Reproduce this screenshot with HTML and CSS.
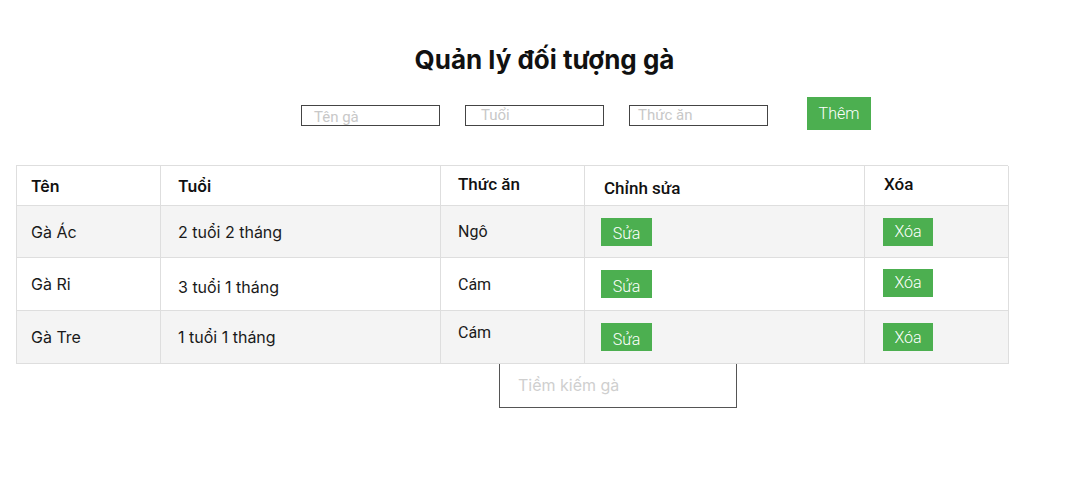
FILE: index.html
```html
<!DOCTYPE html>
<html lang="vi">
<head>
<meta charset="utf-8">
<title>Quản lý đối tượng gà</title>
<link rel="stylesheet" href="styles.css">
</head>
<body>
<div class="page">
  <h1 class="title">Quản lý đối tượng gà</h1>
  <div class="form-row">
    <div class="field pad-a"><span class="ph">Tên gà</span></div>
    <div class="field pad-b"><span class="ph">Tuổi</span></div>
    <div class="field pad-c"><span class="ph">Thức ăn</span></div>
    <button class="btn btn-add">Thêm</button>
  </div>
  <div class="grid">
    <div class="cell head inter">Tên</div>
    <div class="cell head inter col-wide">Tuổi</div>
    <div class="cell head roboto up2">Thức ăn</div>
    <div class="cell head roboto col-wide down2 pl20">Chỉnh sửa</div>
    <div class="cell head roboto up2 pl20">Xóa</div>

    <div class="cell alt inter">Gà Ác</div>
    <div class="cell alt inter col-wide">2 tuổi 2 tháng</div>
    <div class="cell alt roboto">Ngô</div>
    <div class="cell alt col-wide"><button class="btn btn-sm btn-edit">Sửa</button></div>
    <div class="cell alt pl19"><button class="btn btn-sm">Xóa</button></div>

    <div class="cell inter">Gà Ri</div>
    <div class="cell inter col-wide down5">3 tuổi 1 tháng</div>
    <div class="cell roboto">Cám</div>
    <div class="cell col-wide"><button class="btn btn-sm btn-edit">Sửa</button></div>
    <div class="cell pl19 up3"><button class="btn btn-sm">Xóa</button></div>

    <div class="cell alt inter">Gà Tre</div>
    <div class="cell alt inter col-wide">1 tuổi 1 tháng</div>
    <div class="cell alt roboto up10">Cám</div>
    <div class="cell alt col-wide"><button class="btn btn-sm btn-edit">Sửa</button></div>
    <div class="cell alt pl19"><button class="btn btn-sm">Xóa</button></div>
  </div>
  <div class="search-wrap">
    <div class="search"><span class="ph-search">Tiềm kiếm gà</span></div>
  </div>
</div>
</body>
</html>
```

FILE: styles.css
```css
* { box-sizing: border-box; }
html, body { margin: 0; padding: 0; background: #fff; }
body { font-family: "Roboto", "Liberation Sans", sans-serif; color: #111; }

.page { width: 1071px; }

.title {
  margin: 0;
  padding: 43px 0 0 18px;
  height: 97px;
  text-align: center;
  font-family: "Inter", "Roboto", sans-serif;
  font-size: 26px;
  font-weight: 700;
  line-height: 34px;
  color: #111;
}

.form-row {
  display: flex;
  align-items: flex-start;
  padding-left: 301px;
  gap: 25px;
}

.field {
  margin-top: 8px;
  width: 139px;
  height: 21px;
  border: 1px solid #444;
  display: flex;
  align-items: center;
  font-family: "Roboto", sans-serif;
  font-size: 15px;
}
.pad-a { padding: 3px 0 0 12px; }
.pad-b { padding: 0 0 0 15px; }
.pad-c { padding: 0 0 0 8px; }
.ph { color: #c8c8c8; line-height: 1; }

.btn {
  border: 0;
  background: #4caf50;
  color: #fff;
  font-family: "Roboto", sans-serif;
  font-weight: 300;
  font-size: 16px;
  padding: 0;
  cursor: pointer;
}
.btn-add {
  margin-left: 14px;
  width: 64px;
  height: 33px;
}
.btn-sm {
  width: 51px;
  height: 28px;
}
.btn-edit { padding-top: 4px; }
.pl19 .btn-sm { width: 50px; }

.grid {
  margin: 35px 0 0 16px;
  width: 992px;
  display: grid;
  grid-template-columns: 144px 280px 144px 280px 144px;
  grid-template-rows: 40px 52px 53px 53px;
  border-top: 1px solid #dedede;
  border-left: 1px solid #dedede;
}

.cell {
  display: flex;
  align-items: center;
  padding-left: 14px;
  border-right: 1px solid #dedede;
  border-bottom: 1px solid #dedede;
  font-size: 16px;
  color: #1a1a1a;
}
.cell:nth-child(5n+2),
.cell:nth-child(5n+3) { padding-left: 17px; }
.cell:nth-child(5n+4) { padding-left: 16px; }

.alt { background: #f4f4f4; }

.head { font-weight: 600; font-size: 16px; color: #111; }
.head.roboto { font-weight: 500; font-size: 17px; }

.inter { font-family: "Inter", sans-serif; }
.roboto { font-family: "Roboto", sans-serif; }

.cell.pl20 { padding-left: 19px; }
.cell.pl19 { padding-left: 18px; }
.up2 { padding-bottom: 4px; }
.down2 { padding-top: 4px; }
.up3 { padding-bottom: 3px; }
.down5 { padding-top: 6px; }
.up10 { padding-bottom: 10px; }

.search-wrap {
  padding-left: 499px;
  margin-top: -2px;
}
.search {
  width: 238px;
  height: 46px;
  border: 1px solid #555;
  display: flex;
  align-items: center;
  padding-left: 18px;
  font-family: "Inter", sans-serif;
  font-size: 16px;
}
.ph-search { color: #cfcfcf; }
```
